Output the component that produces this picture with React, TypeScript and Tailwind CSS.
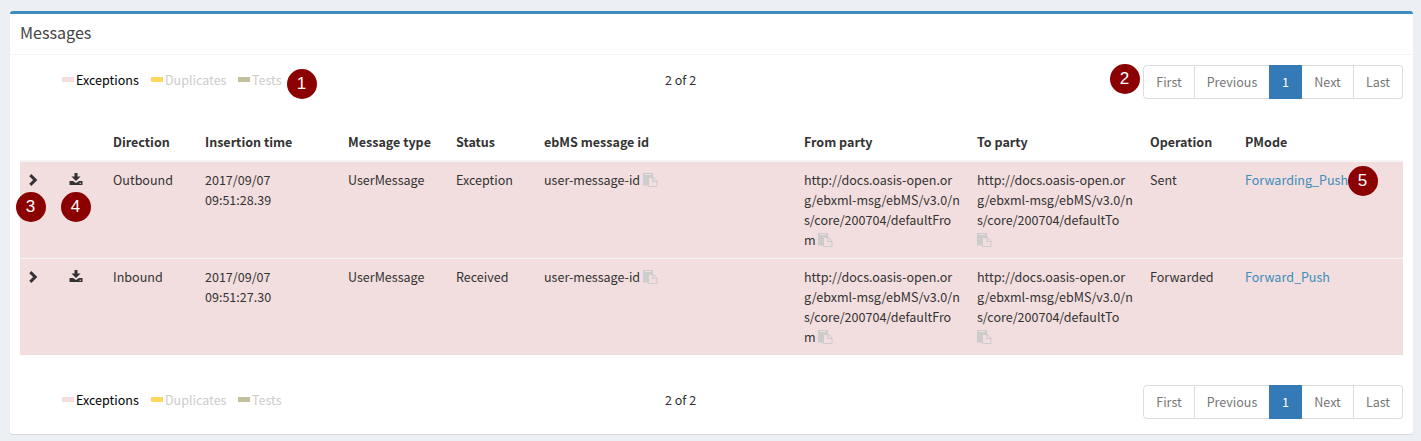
import React from "react";

const COLS = "grid grid-cols-[42px_43px_92px_143px_108px_88px_260px_173px_173px_95px_166px]";

function Paste() {
  return (
    <svg viewBox="0 0 15 14" className="inline-block h-[14px] w-[15px] align-[-2px]">
      <path d="M0 0h10v4H5v8.500H0z" fill="#ccc" />
      <path d="M2 1.500h6" stroke="#f2dede" strokeWidth="1" />
      <path d="M5.500 4.500h5l3.500 3.500v5.500H5.500z" fill="#f2dede" stroke="#ccc" strokeWidth="1" />
      <path d="M10 4.500v4h4" fill="none" stroke="#ccc" strokeWidth="1.200" />
    </svg>
  );
}

function Chevron() {
  return (
    <svg viewBox="0 0 9 12" className="mt-[4px] ml-px block h-3 w-[9px]">
      <path d="M1.300 1.100 6.200 6 1.300 10.900" fill="none" stroke="#333" strokeWidth="3" />
    </svg>
  );
}

function Download() {
  return (
    <svg viewBox="0 0 14 13" className="mt-[3px] -ml-px block h-[13px] w-[14px] fill-[#333]">
      <path d="M5.500 0h3v3.500h3L7 8 2.500 3.500h3zM.5 8h3.500l3 2 3-2h3.500v4H.5zM10.500 9.800v1h1.500v-1z" fillRule="evenodd" />
    </svg>
  );
}

function Badge({ n, className }: { n: number; className: string }) {
  return (
    <span className={"absolute flex h-[30px] w-[30px] items-center justify-center rounded-full bg-[#8b0000] font-['Liberation_Sans'] text-[17px] leading-none text-white " + className}>
      {n}
    </span>
  );
}

function Legend({ label, swatch, text }: { label: string; swatch: string; text: string }) {
  return (
    <div className="flex">
      <span className={"mt-[7px] mr-[2px] h-[5px] w-3 " + swatch} />
      <span className={text}>{label}</span>
    </div>
  );
}

function Toolbar() {
  return (
    <div className="flex h-[34px]">
      <div className="ml-[42px] flex w-[603px] pt-[5px]">
        <div className="w-[89px]"><Legend label="Exceptions" swatch="bg-[#f2dede]" text="text-black" /></div>
        <div className="w-[87px]"><Legend label="Duplicates" swatch="bg-[#ffd761]" text="text-[#ccc]" /></div>
        <Legend label="Tests" swatch="bg-[#c2c19e]" text="text-[#ccc]" />
      </div>
      <div className="pt-[5px]">2 of 2</div>
      <div className="ml-auto flex text-center leading-[32px] text-[#777]">
        <div className="w-[52px] rounded-l-[4px] border border-[#ddd]">First</div>
        <div className="w-[74px] border-y border-[#ddd]">Previous</div>
        <div className="w-[33px] border border-[#337ab7] bg-[#337ab7] text-white">1</div>
        <div className="w-[52px] border-y border-r border-[#ddd]">Next</div>
        <div className="w-[49px] rounded-r-[4px] border-y border-r border-[#ddd]">Last</div>
      </div>
    </div>
  );
}

const rows = [
  { dir: "Outbound", time: "09:51:28.39", status: "Exception", op: "Sent", mode: "Forwarding_Push" },
  { dir: "Inbound", time: "09:51:27.30", status: "Received", op: "Forwarded", mode: "Forward_Push" },
];

export default function App() {
  return (
    <div className="relative h-[441px] w-[1421px] overflow-hidden bg-[#ecf0f5] pt-[11px] pl-[10px] font-['Noto_Sans_CJK_SC',sans-serif] text-[12.54px] leading-[20px] text-[#333]">
      <div className="h-[423px] w-[1403px] rounded-[3px] border-t-[3px] border-[#3c8dbc] bg-white shadow-[0_1px_1px_rgba(0,0,0,0.1)]">
        <div className="h-[41px] border-b border-[#f4f4f4] px-[10px] pt-[9px] text-[16.1px] leading-[18px] text-[#444]">Messages</div>
        <div className="px-[10px] pt-[10px]">
          <Toolbar />
          <div className={COLS + " mt-[25px] h-[38px] border-b-2 border-[#f4f4f4] pt-2 pl-0 font-bold"}>
            <span /><span />
            {["Direction", "Insertion time", "Message type", "Status", "ebMS message id", "From party", "To party", "Operation", "PMode"].map((h) => (
              <span key={h} className="pl-2">{h}</span>
            ))}
          </div>
          {rows.map((r, i) => (
            <div key={r.dir} className={COLS + " bg-[#f2dede] bg-clip-padding pt-2 *:px-2 " + (i ? "h-[97px] border-t border-[#f4f4f4]" : "h-[96px]")}>
              <div><Chevron /></div>
              <div><Download /></div>
              <div>{r.dir}</div>
              <div>2017/09/07<br />{r.time}</div>
              <div>UserMessage</div>
              <div>{r.status}</div>
              <div>user-message-id <Paste /></div>
              <div className="whitespace-nowrap">http://docs.oasis-open.or<br />g/ebxml-msg/ebMS/v3.0/n<br />s/core/200704/defaultFro<br />m <Paste /></div>
              <div className="whitespace-nowrap">http://docs.oasis-open.or<br />g/ebxml-msg/ebMS/v3.0/n<br />s/core/200704/defaultTo<br /><Paste /></div>
              <div>{r.op}</div>
              <div className="text-[#3c8dbc]">{r.mode}</div>
            </div>
          ))}
          <div className="pt-[30px]"><Toolbar /></div>
        </div>
      </div>
      <Badge n={1} className="top-[68.500px] left-[286.500px]" />
      <Badge n={2} className="top-[63.500px] left-[1109.500px]" />
      <Badge n={3} className="top-[191.500px] left-[15.500px]" />
      <Badge n={4} className="top-[191.500px] left-[60.500px]" />
      <Badge n={5} className="top-[165.500px] left-[1347.500px]" />
    </div>
  );
}
